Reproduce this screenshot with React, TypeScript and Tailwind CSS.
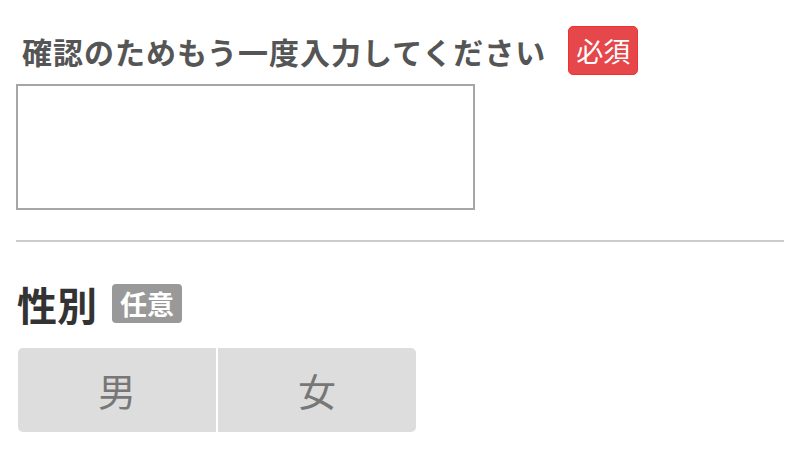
import React from "react";

const jp = { fontFamily: '"Noto Sans CJK JP", "Noto Sans", sans-serif' };

export default function App() {
  return (
    <div className="w-[800px] h-[450px] bg-white px-4 pt-[26px]" style={jp}>
      <div className="flex items-center h-[49px] pl-[6px]">
        <span className="text-[30px] tracking-[1px] font-bold leading-none text-[#555555]">
          確認のためもう一度入力してください
        </span>
        <span className="ml-[22px] h-[49px] flex items-center px-[7px] rounded-[5px] bg-[#e5474b] border border-[#f23030] text-white text-[27px] leading-none">
          必須
        </span>
      </div>
      <div className="mt-[9px] w-[459px] h-[126px] border-2 border-[#a6a6a6] bg-white" />
      <div className="mt-[30px] h-[2px] w-[768px] bg-[#cccccc]" />
      <div className="mt-[42px] flex items-center h-[39px] pl-[1px]">
        <span className="text-[40px] font-bold leading-none text-[#333333]">性別</span>
        <span className="ml-[15px] h-[39px] flex items-center px-[8px] rounded-[4px] bg-[#999999] text-white text-[27px] font-bold leading-none">
          任意
        </span>
      </div>
      <div className="mt-[25px] ml-[2px] flex gap-[2px]">
        <div className="w-[198px] h-[84px] bg-[#dddddd] rounded-l-[5px] flex items-center justify-center text-[38px] leading-none text-[#777777]">
          男
        </div>
        <div className="w-[198px] h-[84px] bg-[#dddddd] rounded-r-[5px] flex items-center justify-center text-[38px] leading-none text-[#777777]">
          女
        </div>
      </div>
    </div>
  );
}
